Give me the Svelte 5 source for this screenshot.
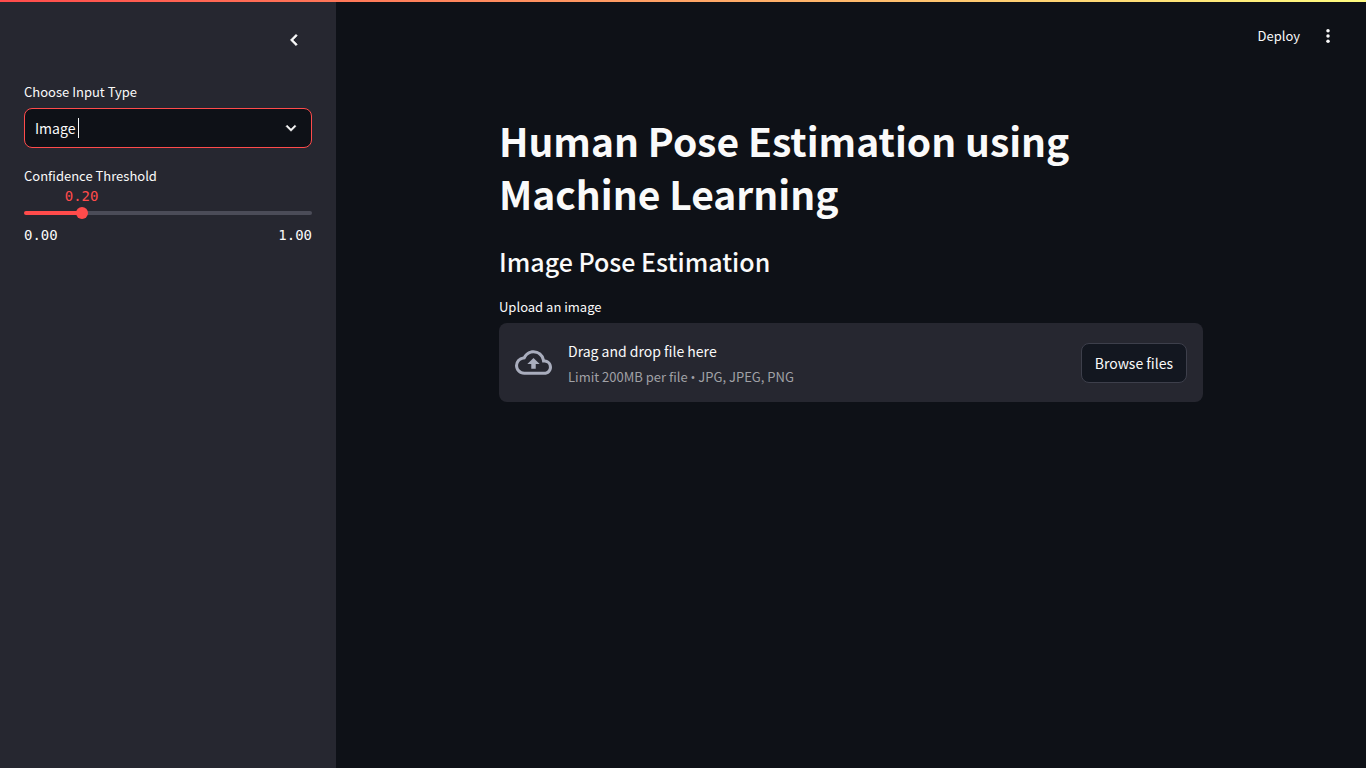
<script>
  const types = ['Image', 'Video', 'Webcam'];
  let inputType = $state('Image');
  let threshold = $state(0.2);
</script>

<div class="app">
  <div class="decoration"></div>

  <aside class="sidebar">
    <div class="sidebar-header">
      <button class="icon-button" type="button" aria-label="Collapse sidebar">
        <svg width="20" height="20" viewBox="0 0 24 24" fill="currentColor">
          <path d="M16 6.8 14.4 5.2 7.6 12l6.8 6.8L16 17.2 10.8 12z" stroke="currentColor" stroke-width="0.6" />
        </svg>
      </button>
    </div>

    <label class="label" for="input-type">Choose Input Type</label>
    <div class="select">
      <select id="input-type" bind:value={inputType}>
        {#each types as type}
          <option value={type}>{type}</option>
        {/each}
      </select>
      <span class="caret"></span>
      <svg class="chevron" width="20" height="20" viewBox="0 0 24 24" fill="currentColor">
        <path d="M16.59 8.59 12 13.17 7.41 8.59 6 10l6 6 6-6z" stroke="currentColor" stroke-width="0.6" />
      </svg>
    </div>

    <label class="label" for="threshold">Confidence Threshold</label>
    <div class="slider" style="--fill: {threshold * 100}%">
      <output class="value" for="threshold">{threshold.toFixed(2)}</output>
      <div class="track">
        <input id="threshold" type="range" min="0" max="1" step="0.01" bind:value={threshold} />
      </div>
      <div class="ticks"><span>0.00</span><span>1.00</span></div>
    </div>
  </aside>

  <div class="page">
    <header class="toolbar">
      <button class="deploy" type="button">Deploy</button>
      <button class="icon-button" type="button" aria-label="Main menu">
        <svg width="20" height="20" viewBox="0 0 24 24" fill="currentColor">
          <circle cx="12" cy="5.8" r="2.1" />
          <circle cx="12" cy="12" r="2.1" />
          <circle cx="12" cy="18.2" r="2.1" />
        </svg>
      </button>
    </header>

    <main class="content">
      <h1>Human Pose Estimation using Machine Learning</h1>
      <h2>Image Pose Estimation</h2>
      <label class="label" for="upload">Upload an image</label>
      <section class="dropzone">
        <input id="upload" type="file" accept=".jpg,.jpeg,.png" hidden />
        <svg class="cloud" width="37" height="37" viewBox="0 0 24 24" fill="currentColor">
          <path d="M19.35 10.04A7.49 7.49 0 0 0 12 4C9.11 4 6.6 5.64 5.35 8.04A5.994 5.994 0 0 0 0 14c0 3.31 2.69 6 6 6h13c2.76 0 5-2.24 5-5 0-2.64-2.05-4.78-4.65-4.96zM19 18H6c-2.21 0-4-1.79-4-4 0-2.05 1.53-3.76 3.56-3.97l1.07-.11.5-.95A5.469 5.469 0 0 1 12 6c2.62 0 4.88 1.86 5.39 4.43l.3 1.5 1.53.11A2.98 2.98 0 0 1 22 15c0 1.65-1.35 3-3 3zM8 13h2.55v3h2.9v-3H16l-4-4z" />
        </svg>
        <div class="instructions">
          <span class="primary">Drag and drop file here</span>
          <small>Limit 200MB per file <span class="bullet">•</span> JPG, JPEG, PNG</small>
        </div>
        <button class="browse" type="button">Browse files</button>
      </section>
    </main>
  </div>
</div>

<style>
  :global(body) {
    margin: 0;
    background: #0e1117;
  }
  .app {
    display: flex;
    min-height: 100vh;
    color: #fafafa;
    font-family: "Noto Sans CJK SC", "Noto Sans", sans-serif;
    font-size: 14px;
    line-height: 24px;
  }
  .app *, .app {
    box-sizing: border-box;
  }
  button, select {
    font: inherit;
    color: inherit;
    cursor: pointer;
  }
  svg {
    display: block;
    flex: none;
  }
  .decoration {
    position: fixed;
    inset: 0 0 auto 0;
    height: 2px;
    z-index: 2;
    background: linear-gradient(90deg, #ff4b4b, #fffd80);
  }
  .sidebar {
    flex: none;
    width: 336px;
    padding: 24px;
    background: #262730;
  }
  .sidebar-header {
    display: flex;
    justify-content: flex-end;
    height: 56px;
    padding-right: 8px;
  }
  .icon-button {
    display: flex;
    align-items: center;
    justify-content: center;
    width: 20px;
    height: 32px;
    padding: 0;
    border: 0;
    background: none;
  }
  .label {
    display: block;
    padding-bottom: 4px;
    font-size: 13px;
  }
  .select {
    position: relative;
    margin-bottom: 16px;
  }
  select {
    display: block;
    width: 100%;
    height: 40px;
    padding: 0 10px;
    border: 1px solid #ff4b4b;
    border-radius: 8px;
    background: #0e1117;
    appearance: none;
    outline: none;
  }
  .caret {
    position: absolute;
    left: 54px;
    top: 10px;
    width: 1px;
    height: 20px;
    background: #fafafa;
  }
  .chevron {
    position: absolute;
    right: 11px;
    top: 10px;
    pointer-events: none;
  }
  .slider {
    font-family: "DejaVu Sans Mono", monospace;
    line-height: 20px;
  }
  .label + .slider {
    margin-top: -6px;
  }
  .value {
    display: block;
    width: max-content;
    margin-left: var(--fill);
    transform: translateX(-50%);
    color: #ff4b4b;
  }
  .track {
    height: 4px;
    margin: 5px 0 10px;
    border-radius: 4px;
    background: linear-gradient(90deg, #ff4b4b var(--fill), #4b4c58 var(--fill));
  }
  input[type="range"] {
    display: block;
    width: calc(100% + 12px);
    height: 12px;
    margin: 0 -6px;
    transform: translateY(-4px);
    background: none;
    appearance: none;
    cursor: pointer;
  }
  input[type="range"]::-webkit-slider-thumb {
    width: 12px;
    height: 12px;
    border: 0;
    border-radius: 50%;
    background: #ff4b4b;
    appearance: none;
  }
  .ticks {
    display: flex;
    justify-content: space-between;
  }
  .page {
    flex: 1;
    min-width: 0;
  }
  .toolbar {
    display: flex;
    align-items: center;
    justify-content: flex-end;
    gap: 18px;
    height: 72px;
    padding-right: 28px;
  }
  .deploy {
    padding: 0;
    border: 0;
    background: none;
    font-size: 13px;
  }
  .content {
    max-width: 736px;
    margin: 0 auto;
    padding: 42px 16px 96px;
  }
  h1 {
    margin: 0 0 24px;
    font-size: 39px;
    font-weight: 700;
    line-height: 53px;
  }
  h2 {
    margin: 0 0 17px;
    font-size: 25px;
    font-weight: 500;
    line-height: 34px;
  }
  .dropzone {
    display: flex;
    align-items: center;
    gap: 16px;
    padding: 16px;
    border-radius: 8px;
    background: #262730;
  }
  .cloud {
    color: #a9adbd;
  }
  .instructions {
    display: flex;
    flex: 1;
    flex-direction: column;
    gap: 5px;
  }
  small {
    color: #a0a1a6;
    font-size: 13px;
    line-height: 18px;
  }
  .bullet {
    font-family: "Open Sans", sans-serif;
  }
  .browse {
    height: 40px;
    padding: 0 13px;
    border: 1px solid #3d3f4b;
    border-radius: 8px;
    background: #131720;
  }
</style>
